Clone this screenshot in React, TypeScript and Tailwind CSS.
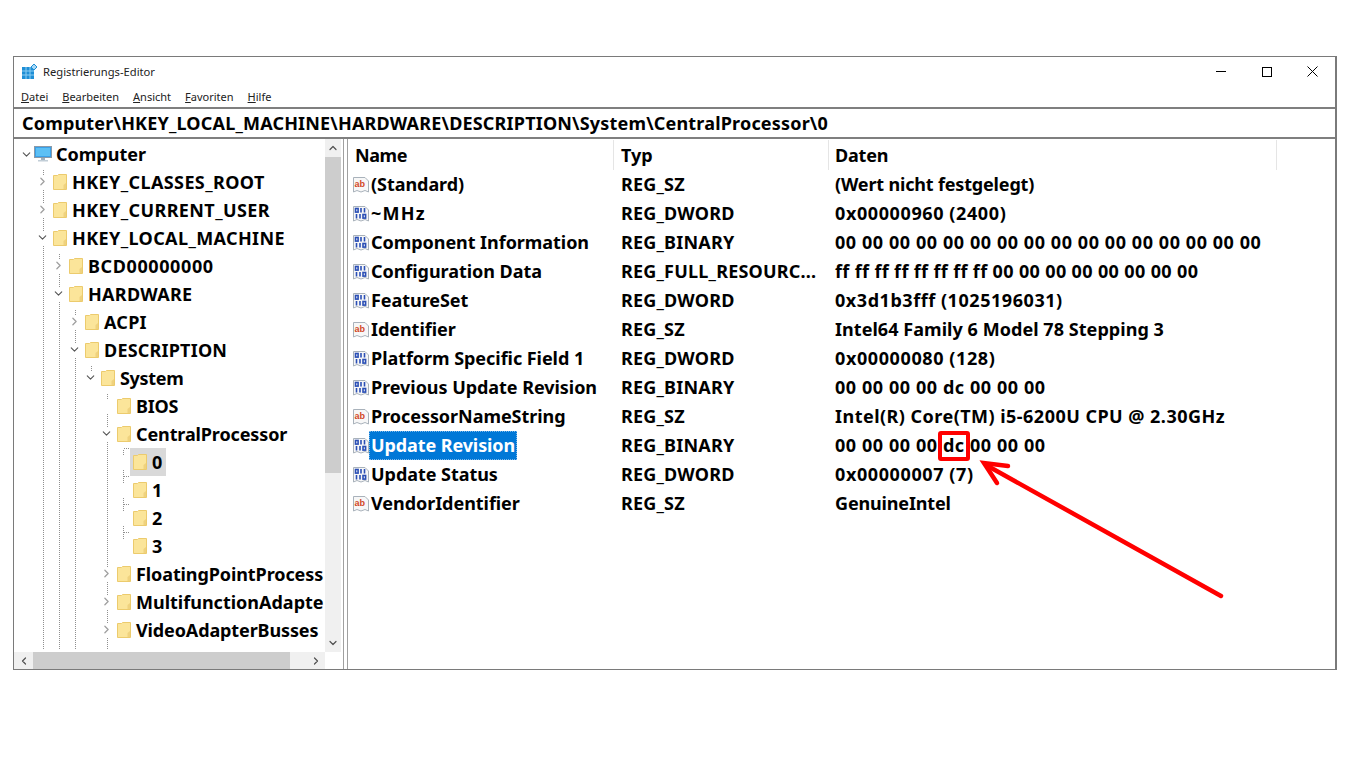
import { ChevronDown, ChevronLeft, ChevronRight, ChevronUp } from 'lucide-react'

type TreeRow = { label: string; depth: number; state?: 'open' | 'closed'; selected?: boolean; tracking?: string }

const treeRows: TreeRow[] = [
  { label: 'HKEY_CLASSES_ROOT', depth: 1, state: 'closed', tracking: 'tracking-[0.4px]' },
  { label: 'HKEY_CURRENT_USER', depth: 1, state: 'closed', tracking: 'tracking-[0.4px]' },
  { label: 'HKEY_LOCAL_MACHINE', depth: 1, state: 'open', tracking: 'tracking-[0.39px]' },
  { label: 'BCD00000000', depth: 2, state: 'closed', tracking: 'tracking-[0.6px]' },
  { label: 'HARDWARE', depth: 2, state: 'open', tracking: 'tracking-[0.3px]' },
  { label: 'ACPI', depth: 3, state: 'closed', tracking: 'tracking-[0.25px]' },
  { label: 'DESCRIPTION', depth: 3, state: 'open', tracking: 'tracking-[0.2px]' },
  { label: 'System', depth: 4, state: 'open', tracking: 'tracking-[-0.3px]' },
  { label: 'BIOS', depth: 5, tracking: 'tracking-[-0.2px]' },
  { label: 'CentralProcessor', depth: 5, state: 'open', tracking: 'tracking-[-0.12px]' },
  { label: '0', depth: 6, selected: true },
  { label: '1', depth: 6 },
  { label: '2', depth: 6 },
  { label: '3', depth: 6 },
  { label: 'FloatingPointProcess', depth: 5, state: 'closed', tracking: 'tracking-[-0.1px]' },
  { label: 'MultifunctionAdapte', depth: 5, state: 'closed' },
  { label: 'VideoAdapterBusses', depth: 5, state: 'closed', tracking: 'tracking-[-0.12px]' },
]

const values = [
  { name: '(Standard)', type: 'REG_SZ', data: '(Wert nicht festgelegt)', tracking: 'tracking-[-0.17px]' },
  { name: '~MHz', type: 'REG_DWORD', data: '0x00000960 (2400)', tracking: 'tracking-[0.6px]', nameTracking: 'tracking-[1.2px]' },
  { name: 'Component Information', type: 'REG_BINARY', data: '00 00 00 00 00 00 00 00 00 00 00 00 00 00 00 00', tracking: 'tracking-[0.57px]' },
  { name: 'Configuration Data', type: 'REG_FULL_RESOURC...', data: 'ff ff ff ff ff ff ff ff 00 00 00 00 00 00 00 00', tracking: 'tracking-[0.36px]' },
  { name: 'FeatureSet', type: 'REG_DWORD', data: '0x3d1b3fff (1025196031)', tracking: 'tracking-[0.55px]' },
  { name: 'Identifier', type: 'REG_SZ', data: 'Intel64 Family 6 Model 78 Stepping 3', tracking: 'tracking-[0.05px]' },
  { name: 'Platform Specific Field 1', type: 'REG_DWORD', data: '0x00000080 (128)', tracking: 'tracking-[0.6px]' },
  { name: 'Previous Update Revision', type: 'REG_BINARY', data: '00 00 00 00 dc 00 00 00', tracking: 'tracking-[0.57px]' },
  { name: 'ProcessorNameString', type: 'REG_SZ', data: 'Intel(R) Core(TM) i5-6200U CPU @ 2.30GHz', tracking: 'tracking-[0.47px]' },
  { name: 'Update Revision', type: 'REG_BINARY', data: '00 00 00 00 dc 00 00 00', selected: true, tracking: 'tracking-[0.57px]' },
  { name: 'Update Status', type: 'REG_DWORD', data: '0x00000007 (7)', tracking: 'tracking-[0.6px]' },
  { name: 'VendorIdentifier', type: 'REG_SZ', data: 'GenuineIntel', tracking: 'tracking-[-0.15px]' },
]

function FolderIcon() {
  return (
    <svg width="14" height="16" viewBox="0 0 14 16" className="shrink-0">
      <path d="M0.5 1.5 H4.5 L5.5 0.5 H13.5 V15.5 H0.5 Z" fill="#fbe59a" stroke="#eccb6d" />
      <path d="M10.5 15 V11 L13 9 V15 Z" fill="#efd27e" />
    </svg>
  )
}

function ComputerIcon() {
  return (
    <svg width="18" height="16" viewBox="0 0 18 16" className="shrink-0">
      <rect x="0.5" y="0.5" width="17" height="11" fill="#3aa0e8" stroke="#8a9aa8" />
      <rect x="2" y="2" width="14" height="8" fill="#5cc0f5" />
      <rect x="7" y="12" width="4" height="2" fill="#9fb0bd" />
      <rect x="4" y="14" width="10" height="1.5" fill="#c2ced7" />
    </svg>
  )
}

function ValueIcon({ kind }: { kind: 'sz' | 'bin' }) {
  return (
    <svg width="16" height="16" viewBox="0 0 16 16" className="shrink-0">
      <path d="M0.5 0.5 H12 L15.5 4 V15 L12 13.5 L8 15 L4 13.5 L0.5 15 Z" fill="#f7f7f7" stroke="#a9b2bb" />
      {kind === 'sz' ? (
        <text x="1.5" y="10" fontSize="9" fontWeight="700" fill="#d24726" fontFamily="Liberation Sans, sans-serif">
          ab
        </text>
      ) : (
        <g fill="none" stroke="#2b4fb5" strokeWidth="1.6">
          <rect x="2.5" y="2.5" width="2.6" height="3.6" />
          <path d="M8 2 V6.5 M11.5 2 V6.5" />
          <path d="M3.5 8 V12.5 M7 8 V12.5" />
          <rect x="10" y="8.5" width="2.6" height="3.6" />
        </g>
      )}
    </svg>
  )
}

function TreeLines() {
  const v = [
    [43, 31, 511],
    [59, 115, 511],
    [75, 171, 511],
    [91, 227, 239],
    [107, 255, 511],
    [123, 311, 407],
  ]
  const h = [
    [107, 268, 113],
    [123, 309, 129],
    [123, 337, 129],
    [123, 365, 129],
    [123, 393, 129],
  ]
  return (
    <svg className="absolute left-0 top-0" width="312" height="511">
      {v.map(([x, a, b]) => (
        <line key={x} x1={x - 13.5} x2={x - 13.5} y1={a} y2={b} stroke="#8f8f8f" strokeDasharray="1 1" />
      ))}
      {h.map(([x, y, e]) => (
        <line key={y} x1={x - 13} x2={e - 13} y1={y + 0.5} y2={y + 0.5} stroke="#8f8f8f" strokeDasharray="1 1" />
      ))}
    </svg>
  )
}

function Tree() {
  return (
    <div className="relative flex-1 overflow-hidden">
      <TreeLines />
      <div className="relative pt-px">
        <div className="flex h-[28px] items-center pl-[4px]">
          <span className="flex w-[16px] justify-center">
            <ChevronDown size={13} strokeWidth={2} color="#555" />
          </span>
          <ComputerIcon />
          <span className="ml-[4px] text-[18px] font-bold text-black">Computer</span>
        </div>
        {treeRows.map((row) => (
          <div
            key={row.label}
            className="flex h-[28px] items-center whitespace-nowrap"
            style={{ paddingLeft: 4 + row.depth * 16 }}
          >
            <span className="flex h-[14px] w-[16px] shrink-0 justify-center bg-white">
              {row.state === 'open' && <ChevronDown size={13} strokeWidth={2} color="#555" />}
              {row.state === 'closed' && <ChevronRight size={13} strokeWidth={2.4} color="#a0a0a0" />}
            </span>
            <span
              className={
                row.selected
                  ? 'flex h-[28px] items-center bg-[#d9d9d9] pr-[4px] pl-[3px]'
                  : 'flex h-[28px] items-center pl-[3px] pr-[4px]'
              }
            >
              <FolderIcon />
              <span className={`ml-[5px] text-[18px] font-bold text-black ${row.tracking ?? ''}`}>{row.label}</span>
            </span>
          </div>
        ))}
      </div>
    </div>
  )
}

function Annotation() {
  return (
    <svg className="pointer-events-none absolute left-0 top-0" width="1351" height="759">
      <rect x="940" y="433" width="28" height="26" rx="1" fill="none" stroke="#ff0000" strokeWidth="4" />
      <g stroke="#ff0000" strokeWidth="4.5" strokeLinecap="round" fill="none">
        <path d="M1221 596 L986 465" />
        <path d="M1008 466 L984 463 L997 483" />
      </g>
    </svg>
  )
}

export default function App() {
  return (
    <div className="relative h-[759px] w-[1351px] overflow-hidden bg-white pt-[56px] pl-[13px] font-['Noto_Sans',sans-serif] text-black">
      <div className="flex h-[614px] w-[1324px] flex-col border border-r-2 border-[#7a7a7a] bg-white">
        <div className="flex h-[29px] shrink-0 items-center pl-[8px]">
          <svg width="15" height="16" viewBox="0 0 15 16" className="shrink-0">
            <rect x="0" y="3" width="12" height="12" fill="#1f8fd6" />
            <path d="M0 7 H12 M0 11 H12 M4 3 V15 M8 3 V15" stroke="#8ccdf2" />
            <path d="M12 0 L15 3 L12 6 L9 3 Z" fill="#a8d8f5" stroke="#1f8fd6" />
          </svg>
          <span className="ml-[6px] pt-[2px] text-[11.2px] text-[#222]">Registrierungs-Editor</span>
          <div className="ml-auto flex items-center">
            <div className="flex w-[46px] justify-center pl-[1px]">
              <div className="h-px w-[10px] bg-black" />
            </div>
            <div className="flex w-[46px] justify-center pl-[1px]">
              <div className="h-[10px] w-[10px] border border-black" />
            </div>
            <div className="flex w-[46px] justify-center pl-[1px]">
              <svg width="11" height="11" viewBox="0 0 11 11">
                <path d="M0.5 0.5 L10.5 10.5 M10.5 0.5 L0.5 10.5" stroke="#000" strokeWidth="1" />
              </svg>
            </div>
          </div>
        </div>
        <div className="flex h-[21px] shrink-0 items-center gap-[14px] pl-[7px] pt-[2px] text-[11px] text-[#222]">
          <span><u>D</u>atei</span>
          <span><u>B</u>earbeiten</span>
          <span><u>A</u>nsicht</span>
          <span><u>F</u>avoriten</span>
          <span><u>H</u>ilfe</span>
        </div>
        <div className="flex h-[32px] shrink-0 items-center border-y-2 border-[#7f7f7f] pl-[8px] text-[18px] font-bold tracking-[0.18px]">
          Computer\HKEY_LOCAL_MACHINE\HARDWARE\DESCRIPTION\System\CentralProcessor\0
        </div>
        <div className="flex min-h-0 flex-1">
          <div className="flex w-[330px] shrink-0 flex-col border-r border-[#a0a0a0]">
            <div className="flex min-h-0 flex-1 pr-[2px]">
              <Tree />
              <div className="flex w-[16px] shrink-0 flex-col bg-[#f0f0f0]">
                <div className="flex h-[18px] items-center justify-center">
                  <ChevronUp size={12} strokeWidth={2.4} color="#505050" />
                </div>
                <div className="h-[316px] bg-[#cdcdcd]" />
                <div className="flex-1" />
                <div className="flex h-[18px] items-center justify-center">
                  <ChevronDown size={12} strokeWidth={2.4} color="#505050" />
                </div>
              </div>
            </div>
            <div className="flex h-[17px] shrink-0 items-center">
              <div className="flex h-full w-[311px] items-center bg-[#f0f0f0]">
                <div className="flex w-[19px] justify-center">
                  <ChevronLeft size={12} strokeWidth={2.4} color="#505050" />
                </div>
                <div className="h-full w-[257px] bg-[#cdcdcd]" />
                <div className="flex flex-1 justify-end pr-[3px]">
                  <ChevronRight size={12} strokeWidth={2.4} color="#505050" />
                </div>
              </div>
            </div>
          </div>
          <div className="ml-[3px] flex-1 border-l border-[#a0a0a0] pt-px">
            <div className="grid h-[30px] grid-cols-[266px_215px_448px_1fr] items-center text-[18px] font-bold">
              <div className="flex h-full items-center border-r border-[#e5e5e5] pl-[7px] tracking-[-0.4px]">Name</div>
              <div className="flex h-full items-center border-r border-[#e5e5e5] pl-[7px]">Typ</div>
              <div className="flex h-full items-center border-r border-[#e5e5e5] pl-[6px] tracking-[-0.2px]">Daten</div>
              <div />
            </div>
            {values.map((row) => (
              <div
                key={row.name}
                className="grid h-[29px] grid-cols-[267px_215px_1fr] items-center whitespace-nowrap text-[18px] font-bold"
              >
                <div className="flex h-full items-center pl-[5px]">
                  <ValueIcon kind={row.type === 'REG_SZ' ? 'sz' : 'bin'} />
                  <span
                    className={
                      row.selected
                        ? 'flex h-full items-center border border-dotted border-[#7fb8e8] bg-[#0078d7] px-[1px] text-white tracking-[-0.1px]'
                        : `ml-[2px] ${row.nameTracking ?? 'tracking-[-0.05px]'}`
                    }
                  >
                    {row.name}
                  </span>
                </div>
                <div className="pl-[6px] tracking-[0.2px]">{row.type}</div>
                <div className={`pl-[5px] ${row.tracking}`}>{row.data}</div>
              </div>
            ))}
          </div>
        </div>
      </div>
      <Annotation />
    </div>
  )
}
